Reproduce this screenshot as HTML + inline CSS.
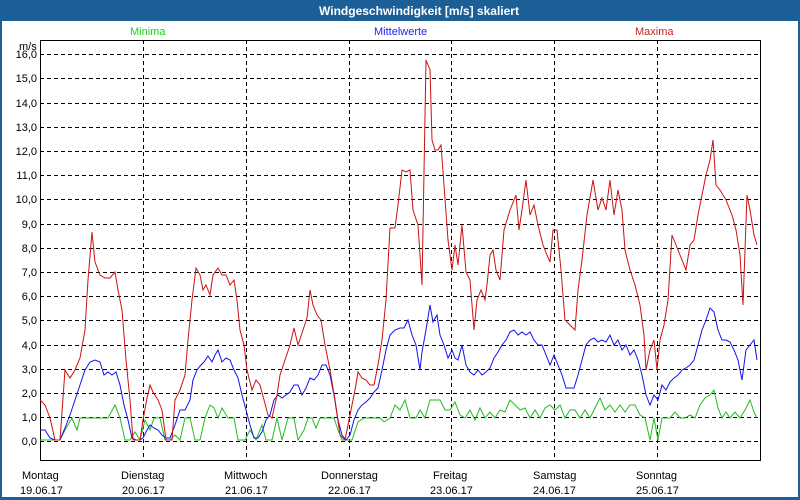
<!DOCTYPE html>
<html><head><meta charset="utf-8"><style>
html,body{margin:0;padding:0;width:800px;height:500px;overflow:hidden;background:#fff}
svg text{font-family:"Liberation Sans",sans-serif;font-size:11px}
</style></head><body>
<svg width="800" height="500" xmlns="http://www.w3.org/2000/svg">
<rect x="0" y="0" width="800" height="500" fill="#1c5f97"/>
<rect x="2" y="21" width="796" height="476" fill="#fff"/>
<text x="419" y="15" text-anchor="middle" fill="#fff" font-weight="bold" style="font-size:12px">Windgeschwindigkeit [m/s] skaliert</text>
<text x="130" y="35" fill="#22cc22">Minima</text>
<text x="374" y="35" fill="#2222ee">Mittelwerte</text>
<text x="635" y="35" fill="#cc2222">Maxima</text>
<text x="19" y="50" fill="#000">m/s</text>
<g stroke="#000" stroke-dasharray="4,3" stroke-width="1">
<line x1="40" x2="760" y1="54.5" y2="54.5"/><line x1="40" x2="760" y1="78.5" y2="78.5"/><line x1="40" x2="760" y1="103.5" y2="103.5"/><line x1="40" x2="760" y1="127.5" y2="127.5"/><line x1="40" x2="760" y1="151.5" y2="151.5"/><line x1="40" x2="760" y1="175.5" y2="175.5"/><line x1="40" x2="760" y1="199.5" y2="199.5"/><line x1="40" x2="760" y1="224.5" y2="224.5"/><line x1="40" x2="760" y1="248.5" y2="248.5"/><line x1="40" x2="760" y1="272.5" y2="272.5"/><line x1="40" x2="760" y1="296.5" y2="296.5"/><line x1="40" x2="760" y1="320.5" y2="320.5"/><line x1="40" x2="760" y1="345.5" y2="345.5"/><line x1="40" x2="760" y1="369.5" y2="369.5"/><line x1="40" x2="760" y1="393.5" y2="393.5"/><line x1="40" x2="760" y1="417.5" y2="417.5"/><line x1="40" x2="760" y1="441.5" y2="441.5"/>
<line x1="143.5" x2="143.5" y1="40" y2="461"/><line x1="246.5" x2="246.5" y1="40" y2="461"/><line x1="349.5" x2="349.5" y1="40" y2="461"/><line x1="451.5" x2="451.5" y1="40" y2="461"/><line x1="554.5" x2="554.5" y1="40" y2="461"/><line x1="657.5" x2="657.5" y1="40" y2="461"/>
</g>
<rect x="40.5" y="40.5" width="720" height="420" fill="none" stroke="#000"/>
<g fill="#000" text-anchor="end">
<text x="37" y="58">16,0</text><text x="37" y="82">15,0</text><text x="37" y="107">14,0</text><text x="37" y="131">13,0</text><text x="37" y="155">12,0</text><text x="37" y="179">11,0</text><text x="37" y="203">10,0</text><text x="37" y="228">9,0</text><text x="37" y="252">8,0</text><text x="37" y="276">7,0</text><text x="37" y="300">6,0</text><text x="37" y="324">5,0</text><text x="37" y="349">4,0</text><text x="37" y="373">3,0</text><text x="37" y="397">2,0</text><text x="37" y="421">1,0</text><text x="37" y="445">0,0</text>
</g>
<g fill="#000">
<text x="22" y="479">Montag</text><text x="20" y="494">19.06.17</text>
<text x="121" y="479">Dienstag</text><text x="122" y="494">20.06.17</text>
<text x="224" y="479">Mittwoch</text><text x="225" y="494">21.06.17</text>
<text x="321" y="479">Donnerstag</text><text x="328" y="494">22.06.17</text>
<text x="433" y="479">Freitag</text><text x="430" y="494">23.06.17</text>
<text x="533" y="479">Samstag</text><text x="533" y="494">24.06.17</text>
<text x="636" y="479">Sonntag</text><text x="636" y="494">25.06.17</text>
</g>
<polyline fill="none" stroke="#22bb22" points="40,440 60,440 65,430 72,418 77,430 80,418 100,418 108,418 115,405 120,418 125,440 130,440 135,432 140,440 145,420 150,430 154,418 160,418 165,440 170,440 175,435 180,440 185,418 190,418 195,440 200,440 205,418 210,405 214,408 218,418 222,408 228,418 234,418 238,440 245,440 250,430 256,440 262,425 266,440 272,440 277,418 282,440 288,418 294,418 298,440 304,430 308,418 312,418 316,428 320,418 334,418 338,430 342,440 352,440 358,422 364,418 380,418 384,422 390,418 395,405 400,410 405,400 410,418 416,418 420,410 425,418 430,400 440,400 445,410 450,410 455,402 460,415 465,418 470,410 475,420 480,408 485,418 490,412 495,418 500,410 505,412 510,400 515,405 520,410 525,408 530,418 535,410 540,418 545,408 550,405 555,410 560,405 565,418 570,410 575,410 580,418 585,410 590,418 595,408 600,398 605,410 610,405 615,412 620,405 625,412 630,405 635,405 640,415 645,418 650,440 654,418 658,440 662,418 670,418 675,412 680,418 685,418 690,415 695,418 700,405 705,398 710,395 714,390 718,408 722,418 726,412 730,418 735,412 740,418 745,410 750,400 754,412 757,418"/>
<polyline fill="none" stroke="#1111ee" points="40,430 45,430 50,438 55,440 60,440 65,428 70,415 75,400 80,385 85,370 90,362 95,360 100,362 104,375 108,372 112,375 116,372 120,385 124,405 128,420 132,438 136,440 140,440 143,438 147,430 150,425 154,428 158,430 162,435 166,438 170,438 175,425 180,410 185,410 190,400 193,380 197,370 200,366 204,362 208,356 212,362 215,355 218,350 222,362 226,358 230,360 234,370 238,378 242,395 246,410 250,425 254,438 258,438 262,432 266,420 270,415 274,400 278,395 282,398 286,395 290,392 294,385 298,385 302,395 306,388 310,378 314,380 318,375 322,365 326,365 330,375 334,395 338,420 342,435 346,440 350,435 354,420 358,410 362,405 366,402 370,398 374,392 378,388 382,370 386,350 390,335 395,330 400,328 404,328 408,320 412,335 416,345 420,370 422,352 426,330 430,305 433,322 437,315 440,335 444,345 448,358 452,350 455,358 458,360 462,345 466,365 470,372 474,375 478,370 482,375 486,372 490,368 494,358 498,352 502,345 506,340 510,332 514,330 518,335 522,332 526,335 530,332 534,340 538,345 542,345 546,355 550,365 554,355 558,365 562,375 566,388 574,388 578,375 582,360 586,345 590,340 594,338 598,342 602,340 606,342 610,335 614,345 618,340 622,350 626,345 630,355 634,350 638,360 642,375 646,395 650,405 654,395 658,400 662,385 666,390 670,382 674,378 678,375 682,370 686,368 690,365 694,360 698,345 702,330 706,320 710,308 714,312 718,330 722,340 726,340 730,342 734,350 738,360 742,380 746,350 750,345 754,340 757,360"/>
<polyline fill="none" stroke="#cc1111" points="40,400 45,405 50,418 55,440 60,440 65,370 70,378 75,370 80,358 85,330 88,280 92,232 95,262 100,275 105,278 110,278 115,272 118,290 122,310 126,360 130,400 133,440 140,440 143,420 147,398 150,385 153,392 158,400 162,410 166,440 172,440 175,400 180,390 185,375 188,340 192,300 196,268 200,275 203,290 206,285 210,295 213,275 218,268 222,275 226,275 230,285 234,280 237,300 240,330 244,345 247,370 252,390 256,380 260,385 264,400 268,415 272,418 277,395 280,375 285,360 290,345 294,328 298,345 303,330 307,318 310,290 313,305 317,315 321,320 325,345 330,370 335,400 340,435 345,440 350,415 355,390 358,372 362,378 366,380 370,385 374,385 378,365 382,340 386,300 390,228 395,228 398,205 402,170 406,172 410,170 413,210 418,225 422,285 426,60 430,70 432,140 435,150 438,150 441,145 444,185 448,240 452,270 455,245 458,265 462,225 466,272 470,280 474,330 477,300 481,290 485,300 487,285 490,255 493,250 496,270 500,280 504,230 510,210 516,195 519,230 522,210 526,180 530,215 534,205 538,225 543,245 547,255 550,262 553,230 557,230 561,270 565,320 570,325 575,330 578,290 582,260 587,215 593,180 598,210 602,198 606,210 610,180 614,215 618,190 622,210 625,250 630,270 635,285 640,305 644,335 646,370 650,350 654,340 657,370 660,340 664,325 668,300 672,235 676,245 680,255 686,270 690,245 694,240 698,215 702,195 706,175 710,160 713,140 716,185 720,190 726,200 732,215 736,230 740,255 743,305 747,195 750,210 754,235 757,245"/>
</svg>
</body></html>
